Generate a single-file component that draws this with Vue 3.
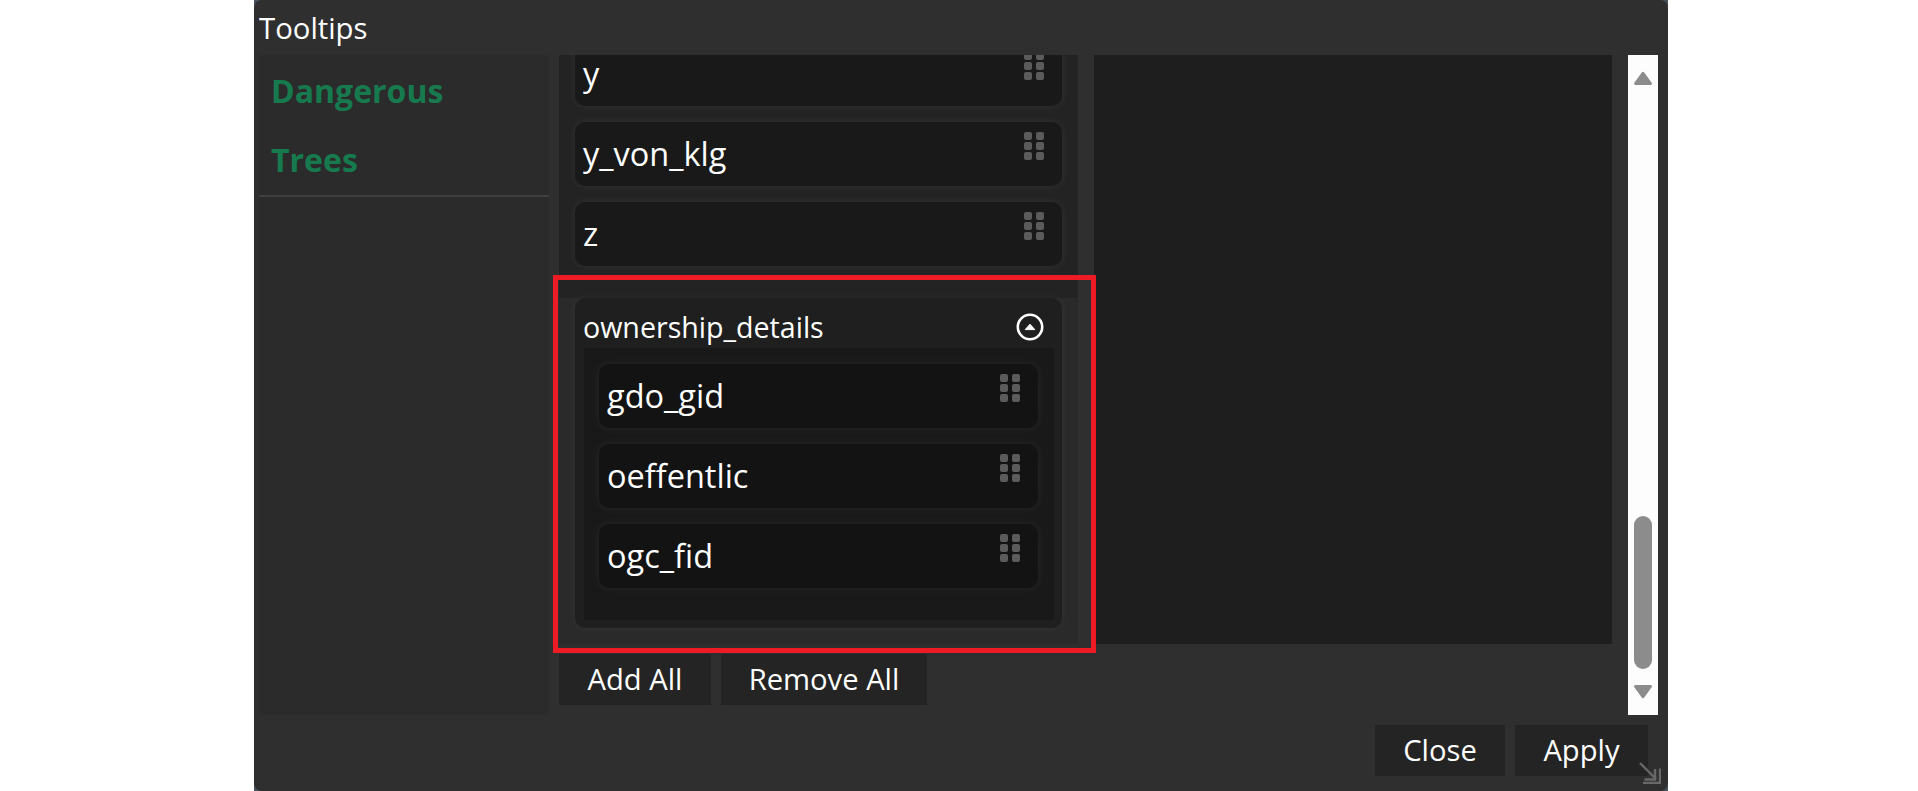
<script setup>
const rules = [{ name: 'Dangerous' }, { name: 'Trees' }]
const topFields = ['y', 'y_von_klg', 'z']
const groupFields = ['gdo_gid', 'oeffentlic', 'ogc_fid']
const dots = [1, 2, 3, 4, 5, 6]
</script>

<template>
  <div class="stage">
    <div class="backing">
      <div class="window">
        <header class="title">Tooltips</header>
        <div class="main">
          <aside class="sidebar">
            <div class="rules">
              <div v-for="r in rules" :key="r.name" class="rule">{{ r.name }}</div>
            </div>
          </aside>

          <section class="middle">
            <div class="list">
              <div class="loose">
                <div v-for="f in topFields" :key="f" class="field">
                  <span>{{ f }}</span>
                  <span class="grip"><i v-for="d in dots" :key="d"></i></span>
                </div>
              </div>
              <div class="groups">
                <div class="group">
                  <div class="group-head">
                    <span>ownership_details</span>
                    <svg class="toggle" width="28" height="28" viewBox="0 0 28 28">
                      <circle cx="14" cy="14" r="12.2" fill="none" stroke="#fff" stroke-width="2.6" />
                      <path d="M9.2 16.6 14 11.2 18.8 16.6Z" fill="#fff" stroke="#fff" stroke-width="1" stroke-linejoin="round" />
                    </svg>
                  </div>
                  <div class="group-body">
                    <div v-for="f in groupFields" :key="f" class="field inner">
                      <span>{{ f }}</span>
                      <span class="grip"><i v-for="d in dots" :key="d"></i></span>
                    </div>
                  </div>
                </div>
              </div>
            </div>
            <div class="actions">
              <button class="btn add">Add All</button>
              <button class="btn remove">Remove All</button>
            </div>
            <div class="highlight"></div>
          </section>

          <div class="panel"></div>

          <div class="scrollbar">
            <svg width="18" height="14" viewBox="0 0 18 14">
              <path d="M9 2 16.6 12.6H1.4Z" fill="#8c8c8c" stroke="#8c8c8c" stroke-width="2.6" stroke-linejoin="round" />
            </svg>
            <div class="thumb"></div>
            <svg width="18" height="14" viewBox="0 0 18 14">
              <path d="M9 12 16.6 1.4H1.4Z" fill="#8c8c8c" stroke="#8c8c8c" stroke-width="2.6" stroke-linejoin="round" />
            </svg>
          </div>
        </div>

        <footer class="footer">
          <button class="btn close">Close</button>
          <button class="btn apply">Apply</button>
        </footer>

        <svg class="resize" width="22" height="22" viewBox="0 0 22 22">
          <g fill="none" stroke="#686868" stroke-width="2.4">
            <path d="M1 1 17 17" />
            <path d="M16 7V17.5H5.5" />
            <path d="M21 6.5V21H4" />
          </g>
        </svg>
      </div>
    </div>
  </div>
</template>

<style>
html, body { margin: 0; background: #fff; }
</style>

<style scoped>
.stage {
  width: 1918px;
  height: 791px;
  overflow: hidden;
  background: #fff;
  font-family: "Open Sans", "Noto Sans", sans-serif;
  color: #fff;
}
.backing {
  margin-left: 254px;
  width: 1414px;
  height: 791px;
  background: #47525c;
}
.window {
  position: relative;
  width: 100%;
  height: 100%;
  display: flex;
  flex-direction: column;
  background: #2f2f2f;
  border-radius: 8px;
  overflow: hidden;
}
.title {
  height: 55px;
  flex: none;
  box-sizing: border-box;
  padding: 8px 0 0 5px;
  font-size: 29.3px;
  line-height: 40px;
}
.main {
  display: flex;
  height: 660px;
  flex: none;
  padding-left: 5px;
}
.sidebar {
  width: 290px;
  flex: none;
  background: #2b2b2b;
}
.rules {
  padding: 2px 0 1px;
  border-bottom: 2px solid #3f3f3f;
}
.rule {
  height: 68.5px;
  line-height: 68px;
  padding-left: 12px;
  font-size: 32px;
  font-weight: 700;
  color: #177a4f;
}
.middle {
  position: relative;
  width: 519px;
  margin-left: 10px;
  flex: none;
}
.list {
  height: 589px;
  overflow: hidden;
  background: #2a2a2a;
}
.loose {
  height: 243px;
  box-sizing: border-box;
  padding: 0 16px;
  background: #232323;
  overflow: hidden;
}
.loose .field:first-child { margin-top: -13px; }
.field {
  position: relative;
  height: 64px;
  margin-bottom: 16px;
  box-sizing: border-box;
  padding-left: 8px;
  display: flex;
  align-items: center;
  background: #191919;
  border-radius: 10px;
  box-shadow: 0 0 10px rgba(255, 255, 255, 0.07);
  font-size: 32.5px;
  line-height: 38px;
}
.grip {
  position: absolute;
  right: 18px;
  top: 10px;
  display: grid;
  grid-template-columns: 8px 8px;
  grid-auto-rows: 8px;
  column-gap: 4px;
  row-gap: 2px;
}
.grip i {
  display: block;
  background: #5b5b5b;
  border-radius: 2px;
}
.groups {
  padding: 0 16px;
}
.group {
  height: 330px;
  box-sizing: border-box;
  padding: 0 8px 8px 9px;
  display: flex;
  flex-direction: column;
  background: #1f1f1f;
  border-radius: 10px;
  box-shadow: 0 0 10px rgba(255, 255, 255, 0.05);
}
.group-head {
  height: 50px;
  flex: none;
  display: flex;
  align-items: center;
  justify-content: space-between;
  font-size: 28.6px;
  padding-top: 8px;
  box-sizing: border-box;
}
.group-head span {
  margin-left: -1px;
  line-height: 38px;
}
.toggle {
  margin-right: 10px;
  margin-top: -1px;
}
.group-body {
  flex: 1;
  box-sizing: border-box;
  padding: 16px 16px 0 15px;
  background: #191919;
}
.field.inner {
  background: #131313;
  padding-left: 8px;
}
.actions {
  display: flex;
  gap: 10px;
  margin-top: 10px;
}
.btn {
  height: 51px;
  padding: 0 0 2px;
  border: none;
  background: #242424;
  color: #fff;
  font-family: inherit;
  font-size: 29.2px;
}
.add { width: 152px; }
.remove { width: 206px; }
.highlight {
  position: absolute;
  left: -6px;
  top: 220px;
  width: 543px;
  height: 378px;
  box-sizing: border-box;
  border: 5px solid #ed1c24;
  pointer-events: none;
}
.panel {
  width: 518px;
  height: 589px;
  margin-left: 16px;
  flex: none;
  background: #1e1e1e;
}
.scrollbar {
  position: relative;
  width: 30px;
  height: 660px;
  margin-left: 16px;
  flex: none;
  box-sizing: border-box;
  padding: 16px 6px;
  display: flex;
  flex-direction: column;
  justify-content: space-between;
  background: #fdfdfd;
}
.thumb {
  position: absolute;
  left: 6px;
  top: 461px;
  width: 18px;
  height: 153px;
  border-radius: 9px;
  background: #8c8c8c;
}
.footer {
  display: flex;
  justify-content: flex-end;
  gap: 10px;
  padding: 10px 20px 0 0;
}
.close { width: 130px; }
.apply { width: 133px; }
.resize {
  position: absolute;
  right: 7px;
  bottom: 7px;
}
</style>
